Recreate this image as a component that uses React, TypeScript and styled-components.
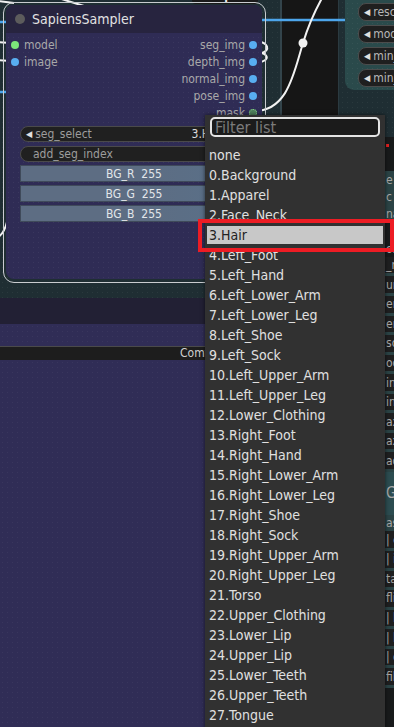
import * as React from 'react'
import styled, { createGlobalStyle } from 'styled-components'

const FONT = `"Liberation Sans Narrow", "Arial Narrow", "DejaVu Sans Condensed", "Liberation Sans", sans-serif`

const GlobalStyle = createGlobalStyle`
  html, body {
    margin: 0;
    padding: 0;
    background: #1f2e33;
  }
  body {
    font-family: ${FONT};
  }
`

const dots = (c: string) => `radial-gradient(${c} 0.8px, transparent 1px)`

const Canvas = styled.div`
  position: relative;
  width: 394px;
  height: 727px;
  overflow: hidden;
  display: flex;
  flex-direction: column;
  background-color: #1f2e33;
  background-image: ${dots('rgba(255,255,255,0.05)')};
  background-size: 5px 5px;
`

const DarkColumn = styled.div`
  position: absolute;
  left: 280px;
  top: 0;
  width: 56px;
  height: 292px;
  background: #161616;
  border-left: 2px solid #33444b;
  border-right: 1px solid #2b3a40;
`

const Wires = styled.svg`
  position: absolute;
  left: 0;
  top: 0;
  width: 394px;
  height: 300px;
  z-index: 1;
  pointer-events: none;
`

const TopTab = styled.div`
  position: absolute;
  left: 192px;
  top: -9px;
  width: 66px;
  height: 13px;
  background: #1a1a1a;
  border-radius: 4px;
  color: #f0f0f0;
  font-size: 12px;
  font-weight: bold;
  line-height: 11px;
  text-align: center;
  z-index: 2;
`

const Node = styled.div`
  position: relative;
  margin: 5px 0 0 6px;
  width: 256px;
  height: 274px;
  border-radius: 8px;
  display: flex;
  flex-direction: column;
  background-color: #2f2c55;
  background-image: ${dots('rgba(255,255,255,0.05)')};
  background-size: 5px 5px;
  z-index: 2;

  &::before {
    content: '';
    position: absolute;
    inset: -3px -4px -4px -3px;
    border: 1.5px solid #c9ccd0;
    border-radius: 11px;
    pointer-events: none;
  }
`

const TitleBar = styled.div`
  height: 28px;
  display: flex;
  align-items: center;
  gap: 7px;
  padding-left: 9px;
  background: #27243f;
  border-radius: 8px 8px 0 0;
  color: #e2e2e2;
  font-size: 14px;
`

const TitleDot = styled.span`
  width: 10px;
  height: 10px;
  border-radius: 50%;
  background: #5c5c5c;
`

const Slots = styled.div`
  display: flex;
  justify-content: space-between;
  padding: 3px 5px 0 5px;
  height: 91px;
  box-sizing: border-box;
`

const SlotCol = styled.div<{ $right?: boolean }>`
  display: flex;
  flex-direction: column;
  align-items: ${p => (p.$right ? 'flex-end' : 'flex-start')};
`

const Slot = styled.div<{ $right?: boolean }>`
  height: 17px;
  display: flex;
  align-items: center;
  flex-direction: ${p => (p.$right ? 'row-reverse' : 'row')};
  gap: ${p => (p.$right ? '4px' : '5px')};
  color: #a9a9a9;
  font-size: 12px;
`

const SlotDot = styled.span<{ $color: string; $hollow?: boolean }>`
  width: 8px;
  height: 8px;
  border-radius: 50%;
  box-sizing: border-box;
  background: ${p => (p.$hollow ? '#4f7f5c' : p.$color)};
  border: ${p => (p.$hollow ? `1.5px dotted ${p.$color}` : 'none')};
`

const Widgets = styled.div`
  display: flex;
  flex-direction: column;
  padding: 2px 14px 0 14px;
`

const Pill = styled.div<{ $indent?: number }>`
  height: 16px;
  margin-bottom: 4px;
  display: flex;
  align-items: center;
  box-sizing: border-box;
  padding: 0 8px 0 ${p => p.$indent ?? 5}px;
  background: #202020;
  border: 1px solid #4a4a4a;
  border-radius: 8px;
  color: #9d9d9d;
  font-size: 12px;
`

const Arrow = styled.span`
  color: #e0e0e0;
  font-size: 9px;
  margin-right: 3px;
`

const PillValue = styled.span`
  margin-left: auto;
  margin-right: 15px;
  color: #dcdcdc;
`

const ColorButton = styled.div`
  height: 17px;
  margin: -1px 0 4px 0;
  display: flex;
  align-items: center;
  justify-content: center;
  box-sizing: border-box;
  background: linear-gradient(90deg, #5d6d83 0%, #5d6d83 55%, #587089 100%);
  border: 1px solid #3f4a5a;
  color: #e2e6ea;
  font-size: 12px;
  white-space: pre;
`

const TealNode = styled.div`
  position: absolute;
  left: 345px;
  top: -14px;
  width: 70px;
  height: 104px;
  padding: 17px 0 0 13px;
  box-sizing: border-box;
  display: flex;
  flex-direction: column;
  gap: 4px;
  border-radius: 9px;
  background-color: #2a4a4b;
  background-image: ${dots('rgba(255,255,255,0.05)')};
  background-size: 5px 5px;
  z-index: 2;
`

const TealPill = styled.div`
  height: 16px;
  display: flex;
  align-items: center;
  padding-left: 5px;
  background: #1f1f1f;
  border: 1px solid #4c4c4c;
  border-radius: 8px;
  color: #b8b8b8;
  font-size: 12px;
  white-space: nowrap;
`

const Lower = styled.div`
  margin-top: 19px;
  flex: 1;
  display: flex;
  flex-direction: column;
`

const Band = styled.div<{ $h?: number; $tone: 'dark' | 'purple' }>`
  height: ${p => (p.$h ? `${p.$h}px` : 'auto')};
  flex: ${p => (p.$h ? 'none' : '1')};
  background-color: ${p => (p.$tone === 'dark' ? '#222034' : '#302d56')};
  background-image: ${p => (p.$tone === 'purple' ? dots('rgba(255,255,255,0.045)') : 'none')};
  background-size: 5px 5px;
`

const TitleStrip = styled.div`
  height: 14px;
  box-sizing: border-box;
  padding-left: 180px;
  background: #1d1d1d;
  border-top: 1px solid #4a4a4a;
  color: #d0d0d0;
  font-size: 12px;
  line-height: 13px;
  white-space: nowrap;
`

const Strip = styled.div`
  position: absolute;
  left: 383px;
  top: 137px;
  width: 30px;
  bottom: 0;
  display: flex;
  flex-direction: column;
  z-index: 2;
`

const StripRow = styled.div<{ $h: number; $tone: 'black' | 'teal' | 'widget' | 'bright' }>`
  height: ${p => p.$h}px;
  display: flex;
  align-items: center;
  padding-left: 3px;
  box-sizing: border-box;
  font-size: ${p => (p.$tone === 'bright' ? 15 : 12)}px;
  color: #a7a7a7;
  white-space: nowrap;
  background: ${p =>
    p.$tone === 'black'
      ? '#181a1b'
      : p.$tone === 'teal'
        ? '#2b4345'
        : p.$tone === 'bright'
          ? '#2c4c50'
          : '#1e1f20'};
  border-bottom: ${p => (p.$tone === 'widget' ? '3px solid #2b4345' : 'none')};
`

const RedDot = styled.span`
  width: 3px;
  height: 3px;
  background: #e02020;
`

const Menu = styled.div`
  position: absolute;
  left: 205px;
  top: 115px;
  width: 180px;
  bottom: -20px;
  padding-top: 2px;
  box-sizing: border-box;
  background: #313131;
  box-shadow: 0 0 4px rgba(0, 0, 0, 0.6);
  z-index: 5;
  display: flex;
  flex-direction: column;
`

const Filter = styled.input`
  margin: 0 5px 8px 5px;
  height: 20px;
  box-sizing: border-box;
  padding: 0 3px;
  background: #1b1b1b;
  border: 2px solid #e4e4e4;
  border-radius: 5px;
  outline: none;
  font-family: ${FONT};
  font-size: 16px;
  color: #ddd;

  &::placeholder {
    color: #7b7b7b;
  }
`

const Item = styled.div<{ $active?: boolean }>`
  height: ${p => (p.$active ? '18px' : '20px')};
  margin: ${p => (p.$active ? '1px 2px' : '0')};
  padding-left: ${p => (p.$active ? '2px' : '4px')};
  line-height: ${p => (p.$active ? '18px' : '20px')};
  font-size: 14px;
  color: ${p => (p.$active ? '#222' : '#e0e0e0')};
  background: ${p => (p.$active ? '#c8c8c8' : 'transparent')};
  white-space: nowrap;
`

const Highlight = styled.div`
  position: absolute;
  left: 198px;
  top: 219px;
  width: 196px;
  height: 33px;
  box-sizing: border-box;
  border: 4px solid #ed1c24;
  z-index: 6;
`

const segments = [
  'none',
  '0.Background',
  '1.Apparel',
  '2.Face_Neck',
  '3.Hair',
  '4.Left_Foot',
  '5.Left_Hand',
  '6.Left_Lower_Arm',
  '7.Left_Lower_Leg',
  '8.Left_Shoe',
  '9.Left_Sock',
  '10.Left_Upper_Arm',
  '11.Left_Upper_Leg',
  '12.Lower_Clothing',
  '13.Right_Foot',
  '14.Right_Hand',
  '15.Right_Lower_Arm',
  '16.Right_Lower_Leg',
  '17.Right_Shoe',
  '18.Right_Sock',
  '19.Right_Upper_Arm',
  '20.Right_Upper_Leg',
  '21.Torso',
  '22.Upper_Clothing',
  '23.Lower_Lip',
  '24.Upper_Lip',
  '25.Lower_Teeth',
  '26.Upper_Teeth',
  '27.Tongue',
]

const outputs = [
  { name: 'seg_img', color: '#58aef0' },
  { name: 'depth_img', color: '#58aef0' },
  { name: 'normal_img', color: '#58aef0' },
  { name: 'pose_img', color: '#58aef0' },
  { name: 'mask', color: '#8fe08f', hollow: true },
]

type Tone = 'black' | 'teal' | 'widget' | 'bright'
const strip: { h: number; t: Tone; text?: string; dot?: boolean }[] = [
  { h: 18, t: 'black', dot: true },
  { h: 17, t: 'black' },
  { h: 18, t: 'teal', text: 'e' },
  { h: 17, t: 'teal', text: 'c' },
  { h: 17, t: 'teal', text: 'na' },
  { h: 20, t: 'black' },
  { h: 16, t: 'black', text: 'on' },
  ...['_m', 'ur', 'er', 'er', 'so', 'oo', 'in', 'in', 'ax', 'ax', 'ad'].map(text => ({
    h: 20,
    t: 'widget' as Tone,
    text,
  })),
  { h: 44, t: 'bright', text: 'G' },
  { h: 17, t: 'teal', text: 'as' },
  ...['| e', '| i', 'ta', 'fli', '| b', '| l', '| d', 'fill'].map(text => ({
    h: 20,
    t: 'widget' as Tone,
    text,
  })),
  { h: 40, t: 'black' },
]

export default function App() {
  return (
    <>
      <GlobalStyle />
      <Canvas>
        <DarkColumn />
        <TopTab>to Sapiens</TopTab>
        <Wires viewBox="0 0 394 300">
          <path d="M262 20 L346 20" stroke="#4da6ec" strokeWidth="2.5" />
          <path d="M-2 22 L6 22 M-2 92 L6 92" stroke="#4da6ec" strokeWidth="2.5" />
          <g stroke="#f2f2f2" strokeWidth="2" fill="none">
            <path d="M253 111 C288 112, 294 72, 303 43 C310 20, 318 4, 328 -12" />
            <path d="M257 41 C269 43, 270 50, 262 53 M262 53 C270 56, 268 61, 257 63" />
            <path d="M-4 42 L10 43 M-4 60 L10 61" />
            <path d="M55 -3 L84 6 M-2 1 L14 3" />
            <path d="M-3 238 Q4 234 7 222" />
          </g>
          <circle cx="303" cy="43" r="4.5" fill="#f2f2f2" />
        </Wires>

        <Node>
          <TitleBar>
            <TitleDot />
            SapiensSampler
          </TitleBar>
          <Slots>
            <SlotCol>
              <Slot>
                <SlotDot $color="#7ce67a" />
                model
              </Slot>
              <Slot>
                <SlotDot $color="#58aef0" />
                image
              </Slot>
            </SlotCol>
            <SlotCol $right>
              {outputs.map(o => (
                <Slot $right key={o.name}>
                  <SlotDot $color={o.color} $hollow={o.hollow} />
                  {o.name}
                </Slot>
              ))}
            </SlotCol>
          </Slots>
          <Widgets>
            <Pill>
              <Arrow>◀</Arrow>
              seg_select
              <PillValue>3.Hair</PillValue>
            </Pill>
            <Pill $indent={12}>add_seg_index</Pill>
            <ColorButton>BG_R  255</ColorButton>
            <ColorButton>BG_G  255</ColorButton>
            <ColorButton>BG_B  255</ColorButton>
          </Widgets>
        </Node>

        <TealNode>
          <TealPill>
            <Arrow>◀</Arrow>rescale
          </TealPill>
          <TealPill>
            <Arrow>◀</Arrow>model
          </TealPill>
          <TealPill>
            <Arrow>◀</Arrow>min_
          </TealPill>
          <TealPill>
            <Arrow>◀</Arrow>min_
          </TealPill>
        </TealNode>

        <Lower>
          <Band $h={26} $tone="dark" />
          <Band $h={22} $tone="purple" />
          <TitleStrip>Comfy</TitleStrip>
          <Band $tone="purple" />
        </Lower>

        <Strip>
          {strip.map((r, i) => (
            <StripRow key={i} $h={r.h} $tone={r.t}>
              {r.dot ? <RedDot /> : r.text}
            </StripRow>
          ))}
        </Strip>

        <Menu>
          <Filter placeholder="Filter list" />
          {segments.map(s => (
            <Item key={s} $active={s === '3.Hair'}>
              {s}
            </Item>
          ))}
        </Menu>
        <Highlight />
      </Canvas>
    </>
  )
}
